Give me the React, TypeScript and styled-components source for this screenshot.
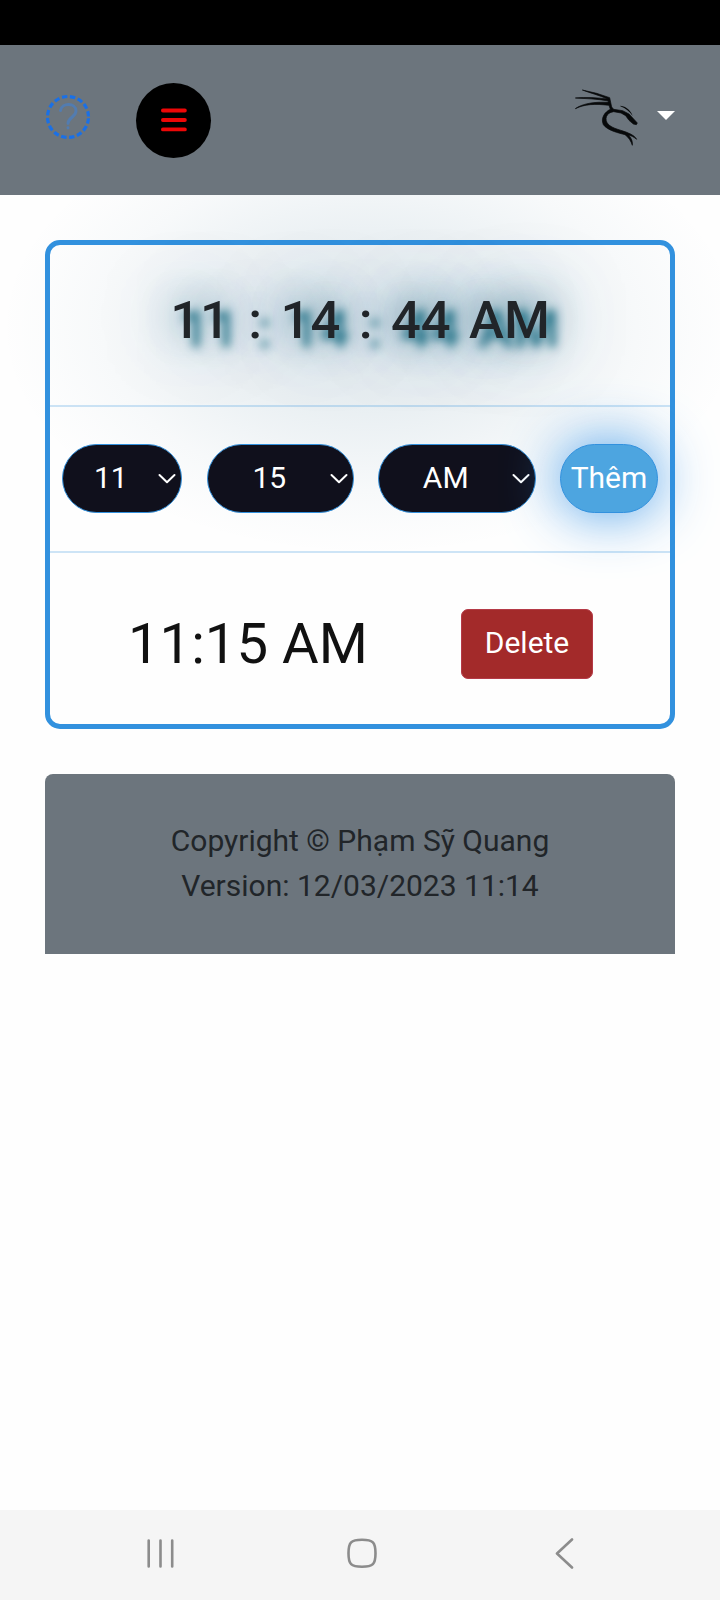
import React from 'react';
import styled, { createGlobalStyle } from 'styled-components';

const GlobalStyle = createGlobalStyle`
  * { box-sizing: border-box; }
  body {
    margin: 0;
    background: #fefefe;
    color: #212529;
    font: 30px/45px Roboto, 'Liberation Sans', sans-serif;
  }
  button { font: inherit; cursor: pointer; }
`;

const Screen = styled.div`
  display: flex;
  flex-direction: column;
  height: 1600px;
  overflow: hidden;
`;

const StatusBar = styled.div`
  flex: none;
  height: 45px;
  background: #000;
  position: relative;
  z-index: 1;
`;

const Header = styled.header`
  flex: none;
  display: flex;
  justify-content: space-between;
  height: 150px;
  padding: 37px 45px;
  background: #6c757d;
  position: relative;
  z-index: 1;
`;

const HeaderGroup = styled.div<{ $gap: number }>`
  display: flex;
  align-items: flex-start;
  gap: ${(p) => p.$gap}px;
`;

const HelpIcon = styled.svg`
  width: 46px;
  height: 46px;
  margin-top: 12px;
  fill: none;
  stroke-linecap: round;
`;

const MenuButton = styled.button`
  display: grid;
  place-items: center;
  width: 75px;
  height: 75px;
  margin-top: 1px;
  padding: 0;
  border: 0;
  border-radius: 50%;
  background: #000;
`;

const Logo = styled.svg`
  width: 75px;
  height: 65px;
  margin-top: 3px;
  color: #07090a;
`;

const Caret = styled.span`
  margin-top: 29px;
  border: solid transparent;
  border-width: 9px 9px 0;
  border-top-color: #fff;
`;

const Main = styled.main`
  flex: 1;
  padding: 45px 45px 0;
`;

const Card = styled.section`
  height: 489px;
  border: 5px solid #3291de;
  border-radius: 15px;
`;

const Clock = styled.h2`
  position: relative;
  height: 162px;
  margin: 0;
  padding-top: 44px;
  border-bottom: 2px solid rgba(50, 145, 222, 0.24);
  font-size: 52.5px;
  font-weight: 500;
  line-height: 63px;
  text-align: center;
  word-spacing: 5.4px;
  text-shadow: 9.4px 9.4px 9.4px #1f7086, 0 0 38px rgb(35, 100, 130),
    0 0 75px rgba(30, 100, 140, 0.7);

  /* wide halo behind the digits */
  &::before {
    content: '';
    position: absolute;
    z-index: -1;
    inset: -145px -70px -150px -50px;
    background: radial-gradient(
      closest-side,
      rgba(30, 95, 130, 0.12) 0%,
      rgba(30, 95, 130, 0.1) 30%,
      rgba(30, 95, 130, 0.065) 52%,
      rgba(30, 95, 130, 0.03) 72%,
      rgba(30, 95, 130, 0.01) 88%,
      rgba(30, 95, 130, 0) 100%
    );
  }
`;

const Form = styled.form`
  display: flex;
  gap: 24px;
  justify-content: center;
  align-items: center;
  height: 146px;
  padding-bottom: 2px;
  border-bottom: 2px solid rgba(50, 145, 222, 0.24);
`;

const Picker = styled.button<{ $width: number }>`
  display: flex;
  align-items: center;
  width: ${(p) => p.$width}px;
  height: 69px;
  padding: 0 5.5px 2px 0;
  border: 1px solid #3291de;
  border-radius: 35px;
  background: #10101c;
  color: #fff;

  &:first-child { margin-right: 1px; }
`;

const PickerValue = styled.span`
  flex: 1;
  padding-left: 1px;
  text-align: center;
`;

const Chevron = styled.svg`
  width: 18px;
  height: 12px;
  margin-top: 4px;
  fill: none;
  stroke: #fff;
  stroke-width: 2;
  stroke-linecap: round;
  stroke-linejoin: round;
`;

const AddButton = styled.button`
  width: 98px;
  height: 69px;
  padding: 0 0 2px;
  border: 1px solid #3291de;
  border-radius: 35px;
  background: #4da5e0;
  color: #fff;
  box-shadow: 0 0 56px rgba(50, 145, 230, 0.9);
`;

const AlarmRow = styled.div`
  display: flex;
  align-items: center;
  justify-content: space-between;
  height: 171px;
  padding: 10px 77px 0 78px;
`;

const AlarmTime = styled.span`
  color: #111;
  font-size: 56.25px;
  line-height: 84px;
`;

const DeleteButton = styled.button`
  width: 132px;
  height: 70px;
  padding: 0 0 2px;
  border: 1px solid #b53a47;
  border-radius: 7px;
  background: #a32a2a;
  color: #fff;
`;

const Footer = styled.footer`
  height: 180px;
  margin-top: 45px;
  padding: 44px 45px;
  border-radius: 8px 8px 0 0;
  background: #6c757d;
  text-align: center;
`;

const NavBar = styled.nav`
  flex: none;
  display: flex;
  justify-content: space-between;
  align-items: flex-start;
  height: 90px;
  padding: 27px 142px 0 145px;
  background: #f5f5f5;
`;

const NavIcon = styled.svg`
  width: 32px;
  height: 32px;
  fill: none;
  stroke: #8c8c8c;
  stroke-width: 2.6;
  stroke-linecap: round;
  stroke-linejoin: round;
`;

const pickers = [
  { value: '11', width: 120 },
  { value: '15', width: 147 },
  { value: 'AM', width: 158 },
];

export default function App() {
  return (
    <Screen>
      <GlobalStyle />
      <StatusBar />
      <Header>
        <HeaderGroup $gap={45}>
          <HelpIcon viewBox="0 0 46 46">
            <circle cx="23" cy="23" r="20.5" stroke="#1a70e6" strokeWidth="3.2" strokeLinecap="butt" strokeDasharray="5.4 2.65" strokeDashoffset="-1.33" />
            <path d="M15.5 16.5C16.5 8.5 31 8.5 31 17C31 23 23 23.5 23 29.5M23 33.8v.3" stroke="#527cb0" strokeWidth="2.9" />
          </HelpIcon>
          <MenuButton aria-label="Menu">
            <svg width="28" height="26" viewBox="0 0 28 26" stroke="#ed0707" strokeWidth="3.8" strokeLinecap="round">
              <path d="M2.9 2.5h22M2.9 12h22M2.9 21.4h22" />
            </svg>
          </MenuButton>
        </HeaderGroup>
        <HeaderGroup $gap={12}>
          <Logo viewBox="0 0 225 195" fill="currentColor">
            <path
              stroke="currentColor"
              strokeWidth="2"
              strokeLinejoin="round"
              d="M37 15 80 25 119 38 125 66 131 73 158 77 177 87 191 102 202 114 199 119 190 117 177 106 167 92 153 84 131 80C107 83 103 104 114 117 126 131 158 136 175 144 187 149 196 155 200 163 192 156 183 152 176 150 184 159 189 171 187 181 183 168 176 157 165 149 145 144 112 136 100 119 91 99 105 80 121 73L117 61C75 56 45 57 16 71 38 55 75 50 114 52L115 48C78 41 47 41 16 39 48 36 83 38 113 42 88 31 60 24 37 15Z"
            />
            <path d="M151 62C172 65 183 78 188 93 178 80 168 70 151 64Z" />
          </Logo>
          <Caret />
        </HeaderGroup>
      </Header>
      <Main>
        <Card>
          <Clock>11 : 14 : 44 AM</Clock>
          <Form onSubmit={(e) => e.preventDefault()}>
            {pickers.map(({ value, width }) => (
              <Picker key={value} type="button" $width={width}>
                <PickerValue>{value}</PickerValue>
                <Chevron viewBox="0 0 18 12">
                  <path d="M1.5 2 9 9.3 16.5 2" />
                </Chevron>
              </Picker>
            ))}
            <AddButton>Thêm</AddButton>
          </Form>
          <AlarmRow>
            <AlarmTime>11:15 AM</AlarmTime>
            <DeleteButton>Delete</DeleteButton>
          </AlarmRow>
        </Card>
        <Footer>
          <div>Copyright © Phạm Sỹ Quang</div>
          <div>Version: 12/03/2023 11:14</div>
        </Footer>
      </Main>
      <NavBar>
        <NavIcon viewBox="0 0 32 32">
          <path d="M3.7 3.5v26M15.5 3.5v26M27.2 3.5v26" />
        </NavIcon>
        <NavIcon viewBox="0 0 32 32">
          <path d="M16 2.8c11 0 13.5 2.5 13.5 13.5S27 29.8 16 29.8 2.500 27.300 2.500 16.300 5 2.800 16 2.800Z" />
        </NavIcon>
        <NavIcon viewBox="0 0 32 32">
          <path d="M26 2.500 11 16.500l15 14" />
        </NavIcon>
      </NavBar>
    </Screen>
  );
}
